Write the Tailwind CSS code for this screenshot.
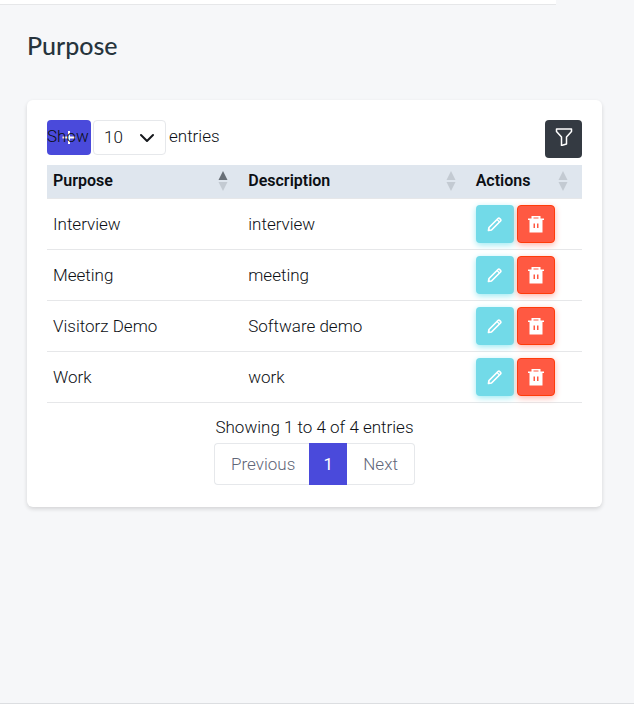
<!DOCTYPE html>
<html lang="en">
<head>
<meta charset="utf-8">
<meta name="viewport" content="width=device-width, initial-scale=1">
<title>Purpose</title>
<script src="https://cdn.jsdelivr.net/npm/@tailwindcss/browser@4"></script>
</head>
<body class="flex min-h-screen flex-col bg-[#f6f7f9] font-[Roboto,'Noto_Sans',sans-serif] text-[17px] leading-6 font-light text-[#0c0f14]">
<svg class="hidden" aria-hidden="true">
  <symbol id="pencil" viewBox="0 0 16 16"><path d="M1.500 14.500l.5-3L11 2.500a1.200 1.200 0 0 1 1.700 0l.8.8a1.200 1.200 0 0 1 0 1.700L4.500 14z" fill="none" stroke="currentColor" stroke-width="1.700" stroke-linejoin="round"/><path d="M10 3.500l2.500 2.500" fill="none" stroke="currentColor" stroke-width="1.200"/></symbol>
  <symbol id="trash" viewBox="0 0 18 18"><path fill="currentColor" fill-rule="evenodd" d="M4.500 1h9v2.500H17V5h-1.500v12.500h-13V5H1V3.500h3.500zM6.500 2.500v1h5v-1zM6.500 8.500v4.500H8V8.500zM10 8.500v4.500h1.500V8.500z"/></symbol>
  <symbol id="sort" viewBox="0 0 10 20"><path d="M5 0l4.500 9h-9z"/><path d="M.5 11h9L5 20z" fill="#c3cad2"/></symbol>
</svg>
<header class="mr-[78px] h-[5px] border-b border-[#e6e7e9] bg-white"></header>
<main class="grow pr-8 pl-[27px] pt-[22px]">
  <h1 class="font-[Lato,sans-serif] text-[25px] leading-9 font-medium text-[#27343d]">Purpose</h1>
  <section class="mt-[37px] rounded-md bg-white px-5 pt-5 pb-[22px] shadow-[0_2px_4px_rgba(0,0,0,0.14)]">
    <div class="flex h-[45px] items-start justify-between">
      <div class="relative flex items-start">
        <button type="button" aria-label="Add purpose" class="flex h-[35px] w-11 items-center justify-center rounded bg-[#4a4adb] text-white">
          <svg class="size-4" viewBox="0 0 16 16" fill="none" stroke="currentColor" stroke-width="2"><path d="M8 1v13M1.500 7.500h13"/></svg>
        </button>
        <label for="length" class="pointer-events-none absolute left-0 leading-8">Show</label>
        <div class="relative ml-0.5">
          <select id="length" class="h-[35px] w-[73px] appearance-none rounded border border-[#e6e8eb] bg-white pb-0.5 pl-2.5">
            <option>10</option><option>25</option><option>50</option><option>100</option>
          </select>
          <svg class="pointer-events-none absolute top-[11px] right-3 size-3.5" viewBox="0 0 14 14" fill="none" stroke="#16191d" stroke-width="2" stroke-linecap="round" stroke-linejoin="round"><path d="M1 4l6 6 6-6"/></svg>
        </div>
        <span class="ml-[3px] leading-8">entries</span>
      </div>
      <button type="button" aria-label="Filter" class="flex h-[38px] w-[37px] items-center justify-center rounded bg-[#343a42] pb-1 text-white">
        <svg class="size-[18px]" viewBox="0 0 18 18" fill="none" stroke="currentColor" stroke-width="1.500" stroke-linejoin="round"><path d="M1.500 1h15v2.500l-5 5.500v7l-5 1.500V9l-5-5.500z"/></svg>
      </button>
    </div>
    <table class="w-full table-fixed border-collapse text-left">
      <colgroup><col class="w-[36.5%]"><col class="w-[42.5%]"><col></colgroup>
      <thead class="bg-[#dfe6ee] text-base">
        <tr class="h-[33px] border-b border-[#e6e7e9]">
          <th class="pr-3.5 pl-1.5 font-semibold"><div class="flex items-center justify-between">Purpose<svg class="h-5 w-2.5 fill-[#686f77]"><use href="#sort"/></svg></div></th>
          <th class="pr-3.5 pl-1.5 font-semibold"><div class="flex items-center justify-between">Description<svg class="h-5 w-2.5 fill-[#c3cad2]"><use href="#sort"/></svg></div></th>
          <th class="pr-3.5 pl-1.5 font-semibold"><div class="flex items-center justify-between">Actions<svg class="h-5 w-2.5 fill-[#c3cad2]"><use href="#sort"/></svg></div></th>
        </tr>
      </thead>
      <tbody>
        <tr class="h-[51px] border-b border-[#e6e7e9]">
          <td class="px-1.5">Interview</td><td class="px-1.5">interview</td>
          <td class="px-1.5"><div class="flex gap-[3px]">
            <button type="button" aria-label="Edit Interview" class="flex size-[38px] items-center justify-center rounded bg-[#72dae8] text-white shadow-[0_2px_6px_#9beaf3]"><svg class="size-4"><use href="#pencil"/></svg></button>
            <button type="button" aria-label="Delete Interview" class="flex size-[38px] items-center justify-center rounded border border-[#ff3b0a] bg-[#ff5942] text-white shadow-[0_2px_6px_#ffb3aa]"><svg class="size-[18px]"><use href="#trash"/></svg></button>
          </div></td>
        </tr>
        <tr class="h-[51px] border-b border-[#e6e7e9]">
          <td class="px-1.5">Meeting</td><td class="px-1.5">meeting</td>
          <td class="px-1.5"><div class="flex gap-[3px]">
            <button type="button" aria-label="Edit Meeting" class="flex size-[38px] items-center justify-center rounded bg-[#72dae8] text-white shadow-[0_2px_6px_#9beaf3]"><svg class="size-4"><use href="#pencil"/></svg></button>
            <button type="button" aria-label="Delete Meeting" class="flex size-[38px] items-center justify-center rounded border border-[#ff3b0a] bg-[#ff5942] text-white shadow-[0_2px_6px_#ffb3aa]"><svg class="size-[18px]"><use href="#trash"/></svg></button>
          </div></td>
        </tr>
        <tr class="h-[51px] border-b border-[#e6e7e9]">
          <td class="px-1.5">Visitorz Demo</td><td class="px-1.5">Software demo</td>
          <td class="px-1.5"><div class="flex gap-[3px]">
            <button type="button" aria-label="Edit Visitorz Demo" class="flex size-[38px] items-center justify-center rounded bg-[#72dae8] text-white shadow-[0_2px_6px_#9beaf3]"><svg class="size-4"><use href="#pencil"/></svg></button>
            <button type="button" aria-label="Delete Visitorz Demo" class="flex size-[38px] items-center justify-center rounded border border-[#ff3b0a] bg-[#ff5942] text-white shadow-[0_2px_6px_#ffb3aa]"><svg class="size-[18px]"><use href="#trash"/></svg></button>
          </div></td>
        </tr>
        <tr class="h-[51px] border-b border-[#e6e7e9]">
          <td class="px-1.5">Work</td><td class="px-1.5">work</td>
          <td class="px-1.5"><div class="flex gap-[3px]">
            <button type="button" aria-label="Edit Work" class="flex size-[38px] items-center justify-center rounded bg-[#72dae8] text-white shadow-[0_2px_6px_#9beaf3]"><svg class="size-4"><use href="#pencil"/></svg></button>
            <button type="button" aria-label="Delete Work" class="flex size-[38px] items-center justify-center rounded border border-[#ff3b0a] bg-[#ff5942] text-white shadow-[0_2px_6px_#ffb3aa]"><svg class="size-[18px]"><use href="#trash"/></svg></button>
          </div></td>
        </tr>
      </tbody>
    </table>
    <p class="pt-3 pb-1 text-center">Showing 1 to 4 of 4 entries</p>
    <nav aria-label="Pagination" class="flex justify-center">
      <a href="#" class="flex h-[42px] items-center rounded-l border border-r-0 border-[#e6e8eb] pr-3.5 pl-4 text-[#5f6678]">Previous</a>
      <a href="#" aria-current="page" class="flex h-[42px] w-[38px] items-center justify-center bg-[#4a4adb] font-normal text-white">1</a>
      <a href="#" class="flex h-[42px] items-center rounded-r border border-l-0 border-[#e6e8eb] px-4 text-[#5f6678]">Next</a>
    </nav>
  </section>
</main>
<footer class="h-0.5 border-t border-[#dcdee1] bg-white"></footer>
</body>
</html>
